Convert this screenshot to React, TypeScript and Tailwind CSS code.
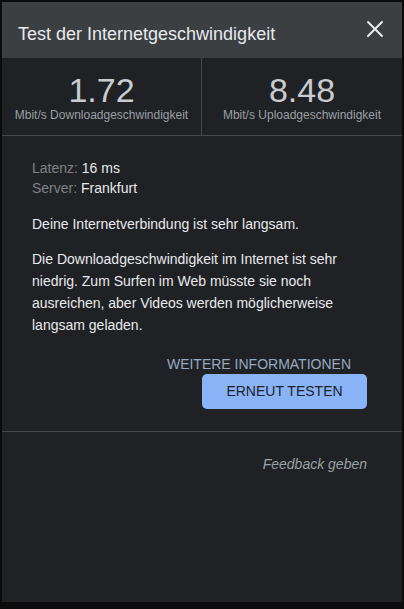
import { X } from "lucide-react";

const stats = [
  { value: "1.72", label: "Mbit/s Downloadgeschwindigkeit" },
  { value: "8.48", label: "Mbit/s Uploadgeschwindigkeit" },
];

const SpeedTestDialog = (): JSX.Element => {
  return (
    <div className="w-[400px] h-[600px] bg-[#202124] flex flex-col font-['Liberation_Sans',Arial,sans-serif]">
      {/* header */}
      <div className="h-[56px] bg-[#3b3f42] flex flex-row justify-between pl-[16px] pr-[13px]">
        <h1 className="pt-[20px] text-[18px] leading-[24px] text-[#e8eaed]">Test der Internetgeschwindigkeit</h1>
        <button type="button" className="mt-[13px] h-[28px] w-[28px] flex items-center justify-center text-[#e8eaed]">
          <X size={28} strokeWidth={1.7} />
        </button>
      </div>

      {/* results */}
      <div className="grid grid-cols-2 border-b border-[#45484c]">
        {stats.map(({ value, label }, i) => (
          <div
            key={label}
            className={`flex flex-col items-center pt-[15px] pb-[13px] ${i === 0 ? "border-r border-[#45484c]" : ""}`}
          >
            <span className="text-[34px] leading-[34px] text-[#c8cbcf]">{value}</span>
            <span className="mt-[1px] text-[12px] leading-[14px] text-[#9aa0a6]">{label}</span>
          </div>
        ))}
      </div>

      {/* details */}
      <div className="pl-[30px] pr-[30px] pt-[22px] text-[14px]">
        <div className="leading-[20px]">
          <span className="text-[#7f8387]">Latenz: </span>
          <span className="text-[#e8eaed]">16 ms</span>
        </div>
        <div className="leading-[20px]">
          <span className="text-[#7f8387]">Server: </span>
          <span className="text-[#e8eaed]">Frankfurt</span>
        </div>
        <p className="mt-[16px] leading-[20px] text-[#e8eaed]">Deine Internetverbindung ist sehr langsam.</p>
        <p className="mt-[14px] leading-[22px] text-[#e8eaed]">
          Die Downloadgeschwindigkeit im Internet ist sehr niedrig. Zum Surfen im Web müsste sie noch ausreichen,
          aber Videos werden möglicherweise langsam geladen.
        </p>
      </div>

      <div className="flex flex-col items-end pr-[35px] mt-[18px] pb-[22px] border-b border-[#45484c]">
        <a className="px-[16px] text-[14px] leading-[20px] text-[#94abc2] cursor-pointer">WEITERE INFORMATIONEN</a>
        <button
          type="button"
          className="w-[165px] h-[35px] rounded-[5px] bg-[#8ab4f8] text-[14px] text-[#202124] flex items-center justify-center"
        >
          ERNEUT TESTEN
        </button>
      </div>

      <div className="flex flex-row justify-end pr-[35px] pt-[22px]">
        <a className="text-[14px] leading-[20px] italic text-[#9aa0a6] cursor-pointer">Feedback geben</a>
      </div>
    </div>
  );
};

export default function App() {
  return (
    <div className="w-[404px] h-[609px] bg-[#0b0b0b] p-[2px]">
      <SpeedTestDialog />
    </div>
  );
}
